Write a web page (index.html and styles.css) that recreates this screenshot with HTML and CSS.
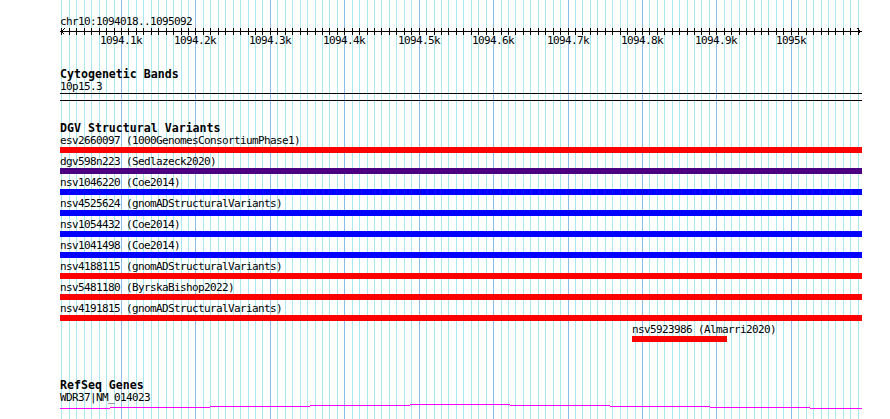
FILE: index.html
```html
<!DOCTYPE html>
<html lang="en">

<head>
    <meta charset="UTF-8">
    <title>chr10:1094018..1095092</title>
    <link rel="stylesheet" href="styles.css">
</head>

<body>
    <div class="view" id="view" data-start="1094018" data-end="1095092">
        <svg class="grid" id="grid" shape-rendering="crispEdges"></svg>

        <section class="ruler">
            <div class="loc">chr10:1094018..1095092</div>
            <svg class="scale" id="scale" width="802" height="7" shape-rendering="crispEdges">
                <rect x="0" y="3" width="802" height="1"></rect>
                <path d="M4.5 0.5 L1.5 3.5 L4.5 6.5"></path>
                <path d="M797.5 0.5 L800.5 3.5 L797.5 6.5"></path>
            </svg>
            <div class="ticks">
                <span data-bp="1094100">1094.1k</span>
                <span data-bp="1094200">1094.2k</span>
                <span data-bp="1094300">1094.3k</span>
                <span data-bp="1094400">1094.4k</span>
                <span data-bp="1094500">1094.5k</span>
                <span data-bp="1094600">1094.6k</span>
                <span data-bp="1094700">1094.7k</span>
                <span data-bp="1094800">1094.8k</span>
                <span data-bp="1094900">1094.9k</span>
                <span data-bp="1095000">1095k</span>
            </div>
        </section>

        <section class="track cyto">
            <h2>Cytogenetic Bands</h2>
            <div class="feat-name">10p15.3</div>
            <div class="band"></div>
        </section>

        <section class="track dgv">
            <h2>DGV Structural Variants</h2>
            <div class="sv">
                <div>esv2660097 (1000GenomesConsortiumPhase1)</div>
                <div class="sv-bar red"></div>
            </div>
            <div class="sv">
                <div>dgv598n223 (Sedlazeck2020)</div>
                <div class="sv-bar indigo"></div>
            </div>
            <div class="sv">
                <div>nsv1046220 (Coe2014)</div>
                <div class="sv-bar blue"></div>
            </div>
            <div class="sv">
                <div>nsv4525624 (gnomADStructuralVariants)</div>
                <div class="sv-bar blue"></div>
            </div>
            <div class="sv">
                <div>nsv1054432 (Coe2014)</div>
                <div class="sv-bar blue"></div>
            </div>
            <div class="sv">
                <div>nsv1041498 (Coe2014)</div>
                <div class="sv-bar blue"></div>
            </div>
            <div class="sv">
                <div>nsv4188115 (gnomADStructuralVariants)</div>
                <div class="sv-bar red"></div>
            </div>
            <div class="sv">
                <div>nsv5481180 (ByrskaBishop2022)</div>
                <div class="sv-bar red"></div>
            </div>
            <div class="sv">
                <div>nsv4191815 (gnomADStructuralVariants)</div>
                <div class="sv-bar red"></div>
            </div>
            <div class="sv" style="margin-left: 572px;">
                <div>nsv5923986 (Almarri2020)</div>
                <div class="sv-bar red" style="width: 95px;"></div>
            </div>
        </section>

        <section class="track refseq">
            <h2>RefSeq Genes</h2>
            <div class="feat-name">WDR37|NM_014023</div>
            <!-- gene drawn tile by tile, each tile one pixel off -->
            <svg class="gene" width="802" height="5" shape-rendering="crispEdges">
                <rect x="0" y="4" width="50" height="1"></rect>
                <rect x="50" y="3" width="100" height="1"></rect>
                <rect x="150" y="2" width="100" height="1"></rect>
                <rect x="250" y="1" width="100" height="1"></rect>
                <rect x="350" y="0" width="100" height="1"></rect>
                <rect x="450" y="1" width="100" height="1"></rect>
                <rect x="550" y="2" width="100" height="1"></rect>
                <rect x="650" y="3" width="100" height="1"></rect>
                <rect x="750" y="4" width="52" height="1"></rect>
            </svg>
        </section>
    </div>

    <script>
        // Map base pairs to pixels
        const view = document.getElementById("view");
        const start = +view.dataset.start;
        const end = +view.dataset.end;
        const scale = 800 / (end - start + 1);
        const svgNS = "http://www.w3.org/2000/svg";

        function toX(bp) {
            return Math.round((bp - start) * scale);
        }

        function addRect(parent, x, y, w, h, cls) {
            const r = document.createElementNS(svgNS, "rect");
            r.setAttribute("x", x);
            r.setAttribute("y", y);
            r.setAttribute("width", w);
            r.setAttribute("height", h);
            if (cls) r.setAttribute("class", cls);
            parent.appendChild(r);
        }

        // Grid lines and ruler ticks every 10bp
        const grid = document.getElementById("grid");
        const ruler = document.getElementById("scale");
        for (let bp = Math.ceil(start / 10) * 10; bp <= end; bp += 10) {
            const x = toX(bp);
            addRect(grid, x, 0, 1, "100%", bp % 100 === 0 ? "major" : "minor");
            addRect(ruler, x, 0, 1, 7);
        }

        // Ruler labels
        document.querySelectorAll("[data-bp]").forEach(el => {
            el.style.left = toX(+el.dataset.bp) + "px";
        });
    </script>
</body>

</html>
```

FILE: styles.css
```css
html,
body {
    margin: 0;
    height: 100%;
}

body {
    background: white;
    color: black;
    font-family: 'DejaVu Sans Mono', monospace;
    font-size: 11px;
    line-height: 12px;
    letter-spacing: -0.62px;
    overflow: hidden;
}

.view {
    position: relative;
    width: 802px;
    min-height: 100%;
    margin-left: 60px;
    padding-top: 16px;
    box-sizing: border-box;
}

.grid {
    position: absolute;
    left: 0;
    top: 0;
    width: 802px;
    height: 100%;
}

.grid .minor {
    fill: #a8e8f0;
}

.grid .major {
    fill: #8cbce8;
}

.ruler,
.track {
    position: relative;
}

.scale {
    display: block;
}

.scale rect {
    fill: black;
}

.scale path {
    fill: none;
    stroke: black;
    stroke-width: 1;
}

.ticks {
    position: relative;
    height: 12px;
}

.ticks span {
    position: absolute;
    top: 0;
    transform: translateX(-50%);
}

.track h2 {
    font-size: 11.6px;
    font-weight: bold;
    line-height: 12px;
    letter-spacing: 0;
    margin: 0;
}

.feat-name {
    margin-top: 1px;
}

.cyto {
    margin-top: 21px;
}

.band {
    height: 6px;
    border-top: 1px solid black;
    border-bottom: 1px solid black;
}

.dgv {
    margin-top: 21px;
}

.dgv h2 {
    margin-bottom: 1px;
}

.sv {
    padding-bottom: 3px;
    white-space: nowrap;
}

.sv-bar {
    height: 6px;
}

.red {
    background: #ff0000;
}

.indigo {
    background: #4b0082;
}

.blue {
    background: #0000ff;
}

.refseq {
    margin-top: 34px;
}

.gene {
    display: block;
}

.gene rect {
    fill: #ff00ff;
}
```
